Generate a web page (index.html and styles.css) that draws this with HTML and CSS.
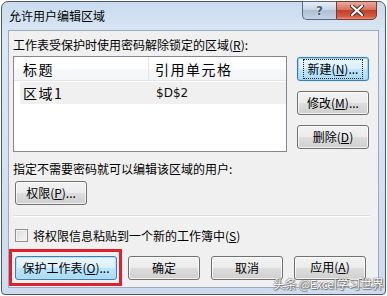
FILE: index.html
```html
<!DOCTYPE html>
<html>
<head>
<meta charset="utf-8">
<link rel="stylesheet" href="styles.css">
</head>
<body>
<div class="window">
  <div class="titlebar">
    <span class="title">允许用户编辑区域</span>
    <div class="controls">
      <div class="ctl help">?</div>
      <div class="ctl close">
        <svg width="14" height="11" viewBox="0 0 14 11"><path d="M2 1 L12 10 M12 1 L2 10" stroke="#3a2a2a" stroke-width="4" stroke-linecap="round"/><path d="M2 1 L12 10 M12 1 L2 10" stroke="#ffffff" stroke-width="2.2" stroke-linecap="round"/></svg>
      </div>
    </div>
  </div>
  <div class="client">
    <div class="label">工作表受保护时使用密码解除锁定的区域(<u>R</u>):</div>
    <div class="main">
      <div class="listbox">
        <div class="lhead"><div class="c1">标题</div><div class="c2">引用单元格</div></div>
        <div class="lrow"><div class="c1">区域1</div><div class="c2 ref">$D$2</div></div>
      </div>
      <div class="side">
        <div class="btn focus"><span class="dots">新建(<u>N</u>)...</span></div>
        <div class="btn">修改(<u>M</u>)...</div>
        <div class="btn">删除(<u>D</u>)</div>
      </div>
    </div>
    <div class="label label2">指定不需要密码就可以编辑该区域的用户:</div>
    <div class="btn perm">权限(<u>P</u>)...</div>
    <div class="sep"></div>
    <div class="check"><span class="box"></span><span>将权限信息粘贴到一个新的工作簿中(<u>S</u>)</span></div>
    <div class="bottom">
      <div class="btn wide hot">保护工作表(<u>O</u>)...</div>
      <div class="btn">确定</div>
      <div class="btn">取消</div>
      <div class="btn apply"><span class="applytxt">应用(<u>A</u>)</span></div>
    </div>
  </div>
</div>
<div class="redbox"></div>
<div class="watermark">头条 @Excel学习世界</div>
</body>
</html>
```
FILE: styles.css
```css
html, body {
  margin: 0;
  padding: 0;
  background: #ffffff;
}
body {
  width: 387px;
  height: 296px;
  position: relative;
  overflow: hidden;
  font-family: "Noto Sans CJK SC", "Microsoft YaHei", sans-serif;
  font-size: 12px;
  color: #000;
}
u { text-decoration: underline; text-underline-offset: 1px; }
.window {
  position: absolute;
  left: 1px;
  top: 1px;
  width: 383px;
  height: 292px;
  border: 1px solid #4b5766;
  border-radius: 7px 7px 4px 4px;
  background: linear-gradient(180deg, #c9dbee 0%, #dbe7f4 12%, #d3e2f2 60%, #cddcee 100%);
  display: flex;
  flex-direction: column;
  box-sizing: content-box;
}
.titlebar {
  height: 28px;
  display: flex;
  align-items: flex-start;
  justify-content: space-between;
  position: relative;
}
.title {
  margin: 6px 0 0 7px;
  font-size: 12px;
  line-height: 16px;
  color: #000;
}
.controls {
  display: flex;
  margin-right: 8px;
  margin-top: -1px;
}
.ctl {
  height: 19px;
  box-sizing: border-box;
  border: 1px solid #5b6a7e;
  display: flex;
  align-items: center;
  justify-content: center;
}
.help {
  width: 34px;
  border-right: none;
  border-radius: 0 0 0 5px;
  background: linear-gradient(180deg, #e6eef8 0%, #c8d6e6 45%, #aebfd4 50%, #c4d4e6 100%);
  color: #4d5d72;
  font-family: "DejaVu Sans", sans-serif;
  font-weight: bold;
  font-size: 12px;
  text-shadow: 0 0 2px #fff;
}
.close {
  width: 41px;
  border-radius: 0 0 5px 0;
  border-color: #7a3a30;
  background: linear-gradient(180deg, #e9a99b 0%, #d8735f 45%, #c2412a 50%, #d45b41 85%, #e6907c 100%);
}
.client {
  margin: 0 6px 6px 6px;
  flex: 1;
  background: #f0f0f0;
  border: 1px solid #9aabc0;
  padding: 6px 8px 0 4px;
  display: flex;
  flex-direction: column;
}
.label {
  line-height: 15px;
  height: 15px;
  white-space: nowrap;
}
.main {
  display: flex;
  margin-top: 4px;
  gap: 10px;
}
.listbox {
  width: 272px;
  height: 94px;
  border: 1px solid #828790;
  background: #fff;
}
.lhead {
  display: flex;
  height: 23px;
  border-bottom: 1px solid #e5e5e5;
  background: linear-gradient(180deg, #ffffff 0%, #ffffff 50%, #f7f8f9 51%, #f3f4f6 100%);
  font-size: 14px;
  letter-spacing: 1.5px;
  align-items: center;
}
.lhead .c1 {
  width: 135px;
  padding-left: 9px;
  box-sizing: border-box;
  height: 100%;
  display: flex;
  align-items: center;
  border-right: 1px solid #e3e5e7;
}
.lhead .c2 { padding-left: 6px; }
.lrow {
  display: flex;
  height: 22px;
  margin: 1px 0 0 6px;
  background: #f0f0f0;
  align-items: center;
  font-size: 14px;
  letter-spacing: 1.5px;
}
.lrow .c1 { width: 130px; padding-left: 3px; box-sizing: border-box; }
.lrow .c2 { padding-left: 6px; }
.ref {
  font-family: "DejaVu Sans", "Liberation Sans", sans-serif;
  font-size: 12px;
  letter-spacing: 0;
  color: #111;
}
.side {
  display: flex;
  flex-direction: column;
  gap: 10px;
  margin-top: 1px;
}
.btn {
  width: 72px;
  height: 24px;
  box-sizing: border-box;
  border: 1px solid #707070;
  border-radius: 3px;
  background: linear-gradient(180deg, #f2f2f2 0%, #ebebeb 50%, #dddddd 51%, #cfcfcf 100%);
  box-shadow: inset 0 0 0 1px rgba(255,255,255,0.75);
  display: flex;
  align-items: center;
  justify-content: center;
  white-space: nowrap;
  line-height: 14px;
}
.btn.focus {
  border-color: #3c7fb1;
  background: linear-gradient(180deg, #eaf6fd 0%, #d9f0fc 50%, #bee6fd 51%, #a7d9f5 100%);
  box-shadow: inset 0 0 0 1px #9cd4f2, 0 0 1px #6bc0ef;
}
.dots {
  outline: 1px dotted #222;
  outline-offset: 1px;
  padding: 1px 3px;
}
.label2 { margin-top: 9px; }
.perm { margin: 5px 0 0 2px; }
.sep {
  height: 0;
  border-top: 1px solid #dcdcdc;
  border-bottom: 1px solid #ffffff;
  margin: 10px 0 0 0;
}
.check {
  display: flex;
  align-items: center;
  margin: 11px 0 0 2px;
  height: 15px;
  gap: 5px;
}
.box {
  width: 11px;
  height: 11px;
  border: 1px solid #8e8f8f;
  background: linear-gradient(135deg, #dcdcdc 0%, #f6f6f6 100%);
  box-shadow: inset 0 0 0 1px #f4f4f4;
}
.bottom {
  display: flex;
  gap: 11px;
  margin: 13px 0 0 2px;
}
.btn.wide { width: 102px; }
.btn.hot {
  border-color: #3c7fb1;
  background: linear-gradient(180deg, #eaf6fd 0%, #d9f0fc 50%, #bee6fd 51%, #a7d9f5 100%);
  box-shadow: inset 0 0 0 1px #b9e0f6;
}
.btn.apply { align-items: flex-start; }
.applytxt { margin-top: 3px; }
.redbox {
  position: absolute;
  left: 9px;
  top: 249px;
  width: 107px;
  height: 31px;
  border: 3px solid #e0202c;
}
.watermark {
  position: absolute;
  left: 273px;
  top: 277px;
  font-size: 12px;
  line-height: 13px;
  color: #ffffff;
  text-shadow: 0 0 1px #555, 0 0 1px #555, 1px 1px 1px #777;
  white-space: nowrap;
  letter-spacing: -0.3px;
}
```
